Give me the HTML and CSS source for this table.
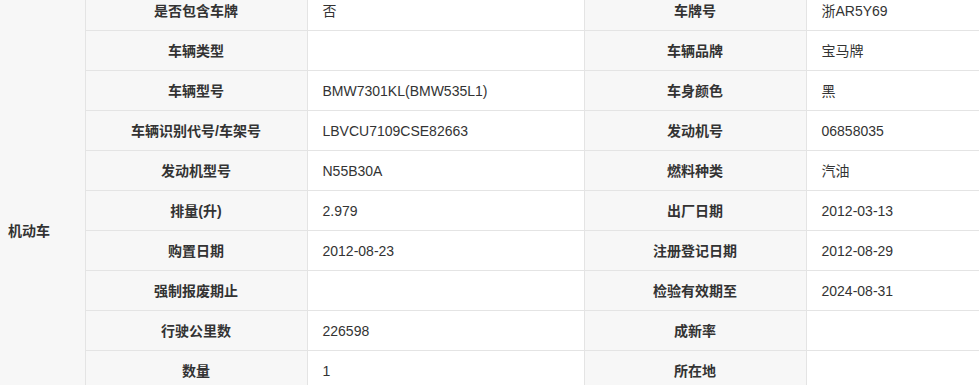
FILE: index.html
```html
<!DOCTYPE html>
<html lang="zh-CN">
<head>
<meta charset="utf-8">
<title>机动车信息</title>
<link rel="stylesheet" href="styles.css">
</head>
<body>
<div class="wrap">
<table class="info">
  <colgroup>
    <col class="c-cat">
    <col class="c-label">
    <col class="c-value">
    <col class="c-label">
    <col class="c-value2">
  </colgroup>
  <tbody>
    <tr>
      <td class="cat" rowspan="12">机动车</td>
      <td class="label">是否包含车牌</td><td class="value">否</td>
      <td class="label">车牌号</td><td class="value">浙AR5Y69</td>
    </tr>
    <tr>
      <td class="label">车辆类型</td><td class="value"></td>
      <td class="label">车辆品牌</td><td class="value">宝马牌</td>
    </tr>
    <tr>
      <td class="label">车辆型号</td><td class="value">BMW7301KL(BMW535L1)</td>
      <td class="label">车身颜色</td><td class="value">黑</td>
    </tr>
    <tr>
      <td class="label">车辆识别代号/车架号</td><td class="value">LBVCU7109CSE82663</td>
      <td class="label">发动机号</td><td class="value">06858035</td>
    </tr>
    <tr>
      <td class="label">发动机型号</td><td class="value">N55B30A</td>
      <td class="label">燃料种类</td><td class="value">汽油</td>
    </tr>
    <tr>
      <td class="label">排量(升)</td><td class="value">2.979</td>
      <td class="label">出厂日期</td><td class="value">2012-03-13</td>
    </tr>
    <tr>
      <td class="label">购置日期</td><td class="value">2012-08-23</td>
      <td class="label">注册登记日期</td><td class="value">2012-08-29</td>
    </tr>
    <tr>
      <td class="label">强制报废期止</td><td class="value"></td>
      <td class="label">检验有效期至</td><td class="value">2024-08-31</td>
    </tr>
    <tr>
      <td class="label">行驶公里数</td><td class="value">226598</td>
      <td class="label">成新率</td><td class="value"></td>
    </tr>
    <tr>
      <td class="label">数量</td><td class="value">1</td>
      <td class="label">所在地</td><td class="value"></td>
    </tr>
    <tr>
      <td class="label"></td><td class="value"></td>
      <td class="label"></td><td class="value"></td>
    </tr>
    <tr>
      <td class="label"></td><td class="value"></td>
      <td class="label"></td><td class="value"></td>
    </tr>
  </tbody>
</table>
</div>
</body>
</html>
```

FILE: styles.css
```css
html, body {
  margin: 0;
  padding: 0;
  background: #ffffff;
  overflow: hidden;
}

.wrap {
  margin-top: -10px;
  width: 990px;
}

.info {
  border-collapse: collapse;
  table-layout: fixed;
  width: 990px;
  font-family: "Liberation Sans", Arial, "Noto Sans CJK SC", sans-serif;
  font-size: 14px;
  color: #333333;
}

.c-cat { width: 85px; }
.c-label { width: 222px; }
.c-value { width: 277px; }
.c-value2 { width: 184px; }

.info td {
  height: 40px;
  border: 1px solid #e4e4e4;
  padding: 0 15px;
  box-sizing: border-box;
  vertical-align: middle;
  line-height: 20px;
}

.info td.cat {
  background: #f7f7f7;
  font-weight: bold;
  padding: 0 8px;
  text-align: left;
  border-left: none;
}

.info td.label {
  background: #f7f7f7;
  font-weight: bold;
  text-align: center;
  padding: 0 8px;
}

.info td.value {
  background: #ffffff;
  text-align: left;
}
```
